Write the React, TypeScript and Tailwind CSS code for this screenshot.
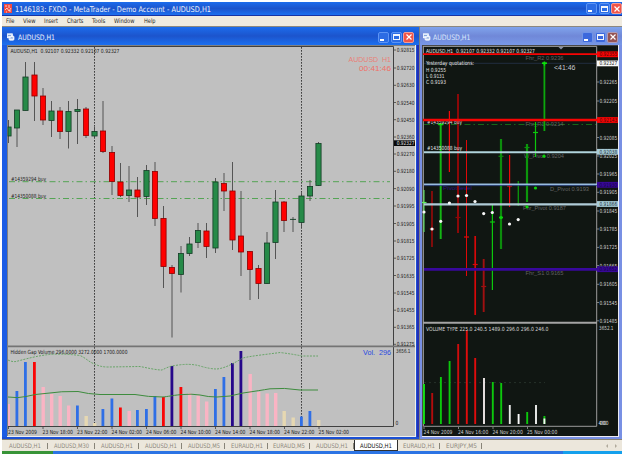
import React from "react";

type Candle = [number, number, number, number, "g" | "r"];

const X0 = 8.4;
const STEP = 8.62;
const px = (i: number) => Math.round((X0 + STEP * i) * 2) / 2;

// wick top, body top, body bottom, wick bottom
const candles: Candle[] = [
  [120, 127, 136, 143, "g"], [110, 110, 128, 147, "g"], [62, 77, 110.5, 110.5, "g"],
  [62, 75, 96, 121, "r"], [88, 96, 120, 125, "r"], [101, 111, 120.5, 137, "g"],
  [107, 111, 131.5, 139, "r"], [101, 111.5, 131.5, 148.5, "g"], [99, 109.5, 111.5, 144, "g"],
  [107, 109, 135.5, 138, "r"], [127, 131.5, 136, 138, "g"], [101, 131, 151.5, 153, "r"],
  [146, 152.5, 181.5, 195, "r"], [163, 182, 195.5, 197, "r"], [166, 190, 195.5, 202, "g"],
  [177, 190, 197, 217, "r"], [165, 170.5, 196.5, 205, "g"], [162, 171.5, 218.5, 226, "r"],
  [206, 218.5, 266.5, 288, "r"], [265, 267.5, 273.5, 337.5, "r"], [246, 253.5, 274.5, 292.5, "g"],
  [237, 244, 253.5, 256, "g"], [223, 230.5, 242.5, 248, "g"], [223, 231, 246.5, 258, "r"],
  [178, 182, 248, 253, "g"], [173, 183.5, 191, 211, "r"], [162, 191, 240, 250, "r"],
  [191, 236, 252, 276, "r"], [251, 251.5, 269.5, 300, "r"], [265, 268.5, 283.5, 299, "r"],
  [232, 243, 283.5, 284, "g"], [190, 202, 242.5, 259, "g"], [201, 202, 220.5, 232, "r"],
  [217, 219.3, 219.5, 232, "g"], [192.5, 196, 222.5, 228, "g"], [180, 186.5, 196, 201, "g"],
  [142, 143.5, 185.5, 186, "g"],
];

const P = "#fab4c4", B = "#2f6fe6", R = "#fa0505", W = "#e6d8b2", N = "#26088a";
const volumes: [number, string][] = [
  [404, P], [391, B], [362, B], [362, R], [387, P], [394, P], [396, P], [405.5, P], [405.5, B],
  [416, W], [423, W], [409, B], [398.5, B], [407.5, R], [411, P], [410, B], [409, B], [396, B],
  [397, R], [366, N], [387, R], [393, P], [395.5, P], [401.5, P], [389, B], [377, B], [363, N],
  [351, N], [374, P], [392, P], [393.5, P], [393, P], [411, W], [417.5, W], [416.5, B], [411, B],
  [420, W],
];

const leftScale: [number, string][] = [
  [50, "0.92815"], [68, "0.92720"], [85.3, "0.92630"], [102.5, "0.92540"], [119.7, "0.92450"],
  [137, "0.92360"], [154, "0.92270"], [171.3, "0.92180"], [188.6, "0.92090"], [206, "0.91995"],
  [223.5, "0.91905"], [241, "0.91815"], [258.2, "0.91725"], [275.5, "0.91635"], [293, "0.91545"],
  [310.2, "0.91455"], [327.3, "0.91365"], [344.3, "0.91275"],
];

const rightScale: [number, string][] = [
  [82, "0.92265"], [101, "0.92205"], [137.5, "0.92085"], [156, "0.92025"], [174, "0.91965"],
  [192.3, "0.91905"], [211, "0.91845"], [229, "0.91785"], [247.4, "0.91725"], [265.6, "0.91665"],
  [284.3, "0.91605"], [302.5, "0.91545"], [320.8, "0.91485"],
];

interface LabelProps {
  x: number;
  y: number;
  w: number;
  s?: number;
  c?: string;
  children: string;
}

function Label({ x, y, w, s = 5.6, c = "#1c1c1c", children }: LabelProps) {
  return (
    <text x={x} y={y + s * 0.36} fontSize={s} fill={c} textLength={w} lengthAdjust="spacingAndGlyphs" className="whitespace-pre">
      {children}
    </text>
  );
}

function LeftChart() {
  return (
    <svg
      viewBox="7 45 409 392"
      width="409"
      height="392"
      className="block font-['DejaVu_Sans_Condensed','DejaVu_Sans',sans-serif]"
    >
      <rect x="7" y="45" width="409" height="392" fill="#c0c0c0" />
      <path d="M7 45.5H415M7.5 45V437" stroke="#808080" />
      <path d="M8 46.5H393.5V426.5H8" fill="none" stroke="#404040" />
      <path d="M415.5 45V437M7 436.5H416" stroke="#f0f0ee" />
      <path d="M94.5 47V426M301.5 47V426" stroke="#404040" strokeDasharray="1.7 1.3" />
      <path d="M9 181.7H390M9 198.5H390" stroke="#48a048" strokeWidth="0.9" strokeDasharray="6 3 1.5 3" />
      {candles.map(([wt, bt, bb, wb, k], i) => {
        const x = px(i);
        const left = Math.max(x - 2.6, 8);
        return (
          <g key={i}>
            <path d={`M${x} ${wt}V${wb}`} stroke="#484848" strokeWidth="0.9" />
            <rect
              x={left}
              y={bt}
              width={x + 2.6 - left}
              height={bb - bt}
              fill={k === "g" ? "#268a48" : "#ff0000"}
              stroke={k === "g" ? "#143c26" : "#8c0000"}
              strokeWidth="0.8"
            />
          </g>
        );
      })}
      {volumes.map(([t, c], i) => {
        const x = px(i);
        return <rect key={i} x={Math.max(x - 1.5, 8)} y={t} width={i === 0 ? 2 : c === P || c === W ? 3.4 : 2.8} height={426 - t} fill={c} />;
      })}
      <path
        d="M8 360Q12 362 16 361.5C22 360 32 357 45 355Q60 353 80 355.5C86 358 90 363 95 364Q100 367 108 367L140 366.5C148 368 156 370 162 370C166 368 170 366 175 365.5Q190 363 200 366Q210 369 217 369C226 368 234 363 243 358C250 356 270 354 280 352.5Q292 354 302 356H318"
        fill="none" stroke="#5ea05e" strokeWidth="0.9" strokeDasharray="2 1.2"
      />
      <path
        d="M8 397Q18 398.5 26 396.5Q35 394 45 393.5Q62 391 78 391.5Q88 394 100 394.5H135Q148 397 163 397C168 396.5 172 395.5 180 394.7Q192 393.5 200 395Q208 397 217 397Q230 397 243 393Q260 390.5 270 388.8Q284 387.5 300 390H318"
        fill="none" stroke="#3e8c3e"
      />
      <path d="M8 346.3H415" stroke="#747474" strokeWidth="1.8" />
      <Label x={10.5} y={51} w={109}>AUDUSD,H1  0.92107 0.92332 0.92107 0.92327</Label>
      <Label x={11} y={179.3} w={35}>#14359294 buy</Label>
      <Label x={11} y={196} w={35}>#14350088 buy</Label>
      <Label x={10.5} y={352.4} w={117}>Hidden Gap Volume 296.0000 3272.0000 1700.0000</Label>
      <g className="font-['Liberation_Sans',Arial,sans-serif]">
        <Label x={348.5} y={59.5} w={42.5} s={7.5} c="#e88078">AUDUSD  H1</Label>
        <Label x={359} y={68} w={32} s={7.5} c="#f07068">00:41:46</Label>
        <Label x={363} y={352.5} w={28} s={7.4} c="#2848e0">Vol.  296</Label>
      </g>
      {leftScale.map(([y, t]) => (
        <g key={t}>
          <path d={`M394 ${y}H396`} stroke="#404040" strokeWidth="0.8" />
          <Label x={396.7} y={y} w={17.8}>{t}</Label>
        </g>
      ))}
      <rect x="394" y="140.3" width="21" height="5.7" fill="#080808" />
      <Label x={396.7} y={143.2} w={17.8} c="#e0e0e0">0.92327</Label>
      <Label x={396} y={351.2} w={14.5}>3656.1</Label>
      <Label x={395.5} y={423.3} w={2.8}>0</Label>
      {["23 Nov 2009", "23 Nov 18:00", "23 Nov 22:00", "24 Nov 02:00", "24 Nov 06:00", "24 Nov 10:00", "24 Nov 14:00", "24 Nov 18:00", "24 Nov 22:00", "25 Nov 02:00"].map((t, i) => (
        <g key={t}>
          <path d={`M${8.5 + i * 34.5} 427v2`} stroke="#404040" strokeWidth="0.8" />
          <Label x={i === 0 ? 8 : 8 + i * 34.5} y={432} w={i === 0 ? 29 : 30.5}>{t}</Label>
        </g>
      ))}
    </svg>
  );
}

// x, top, bottom, colour, width, tick level
const bars: [number, number, number, string, number, number?][] = [
  [424, 190, 232, "#60f060", 1, 202.5],
  [432, 191, 247, "#8c0c0c", 1.8, 229],
  [440.7, 124, 239, "#14b414", 2, 124],
  [449.4, 111, 172, "#f40808", 1.2],
  [458, 94, 233, "#8c0808", 2, 217.5],
  [466.5, 140, 276, "#e00808", 1, 237],
  [475.2, 236, 315, "#d80808", 1.7, 264.5],
  [483.7, 259, 312, "#a01010", 1.9, 286.5],
  [492.4, 205, 290, "#0cc80c", 1.2, 222],
  [501, 139, 249, "#0c8c0c", 2.2, 156.3],
  [509.6, 155, 207, "#f00808", 1.2, 186],
  [518.3, 181, 206, "#0c980c", 1.3],
  [527, 144, 202, "#0c960c", 2.2, 147.5],
  [535.5, 122, 157, "#0cc80c", 1.2, 132.5],
  [544.4, 62, 131, "#0ca80c", 1.8, 63.3],
];

const dots: [number, number][] = [
  [424, 212], [432, 229], [440.7, 221.3], [449.4, 203], [458, 196], [466.5, 195.5], [475, 201.5],
  [483.7, 213.6], [492.3, 212.5], [509.5, 224], [518.2, 219.6],
];

const typeBars: [number, number, string][] = [
  [424, 384, "#14e014"], [432.2, 393, "#b40c0c"], [440.9, 377, "#0cc80c"], [449.6, 361, "#0cc80c"],
  [458.2, 344, "#d00c0c"], [466.8, 330, "#e00c0c"], [475.2, 358, "#e00c0c"], [484, 378, "#f0e8e8"],
  [492.8, 382, "#0cc80c"], [501.2, 383, "#0cc80c"], [509.8, 405, "#e8e8e8"], [518.6, 414, "#fafafa"],
  [527.2, 412, "#0cc80c"], [536, 405, "#f0f0f0"], [544.4, 416, "#0cc80c"],
];

function PriceTag({ y, bg, c, t }: { y: number; bg: string; c: string; t: string }) {
  return (
    <g>
      <rect x="597" y={y - 2.9} width="21" height="5.8" fill={bg} />
      <Label x={599.5} y={y} w={17.8} c={c}>{t}</Label>
    </g>
  );
}

function RightChart() {
  return (
    <svg
      viewBox="422 45 197 392"
      width="197"
      height="392"
      className="block font-['DejaVu_Sans_Condensed','DejaVu_Sans',sans-serif]"
    >
      <rect x="422" y="45" width="197" height="392" fill="#101612" />
      <path d="M422 45.5H619M422.5 45V437" stroke="#404040" />
      <path d="M423 46.4H596.7V426.3H423.4V46" fill="none" stroke="#9c9c9c" />
      <path d="M618.5 45V437M422 436.5H619" stroke="#ececf4" />
      <path d="M424 63.3H596" stroke="#26344c" strokeWidth="0.8" />
      <path d="M424 124.5H596" stroke="#187018" strokeWidth="0.9" strokeDasharray="6 3 1.5 3" />
      <path d="M558.5 47h5l-2.5 2.5z" fill="#8890a8" />
      <Label x={426} y={51.2} w={109} c="#e0e0e0">AUDUSD,H1  0.92107 0.92332 0.92107 0.92327</Label>
      <Label x={426} y={63.2} w={48} c="#e8e8e8">Yesterday quotations:</Label>
      <Label x={426} y={69.6} w={20} c="#e0e0e0">H 0.9255</Label>
      <Label x={426} y={76} w={18.5} c="#e0e0e0">L 0.9131</Label>
      <Label x={426} y={82} w={20} c="#e0e0e0">C 0.9193</Label>
      <g className="font-['Liberation_Sans',Arial,sans-serif]">
        <Label x={554} y={67.7} w={21.5} s={7} c="#c8c8d0">{"<41:46"}</Label>
        <Label x={525.5} y={58} w={38} c="#606060">Fhr_R2 0.9236</Label>
        <Label x={525.5} y={124} w={38} c="#606060">Fhr_R1 0.9214</Label>
        <Label x={524} y={155.5} w={40} c="#646464">W_Pivot 0.9204</Label>
        <Label x={550} y={188.8} w={39} c="#646464">D_Pivot 0.9193</Label>
        <Label x={523} y={207.6} w={43} c="#646464">Fhr_Pivot 0.9187</Label>
        <Label x={525.5} y={273.2} w={38} c="#606060">Fhr_S1 0.9165</Label>
        <Label x={443} y={188.3} w={29} c="#2c1480">Pivot level</Label>
      </g>
      {rightScale.map(([y, t]) => (
        <g key={t}>
          <path d={`M597 ${y}H599`} stroke="#9c9c9c" strokeWidth="0.8" />
          <Label x={599.5} y={y} w={17.8} c="#d0d0d0">{t}</Label>
        </g>
      ))}
      {bars.map(([x, t, b, c, w, tick]) => (
        <g key={x}>
          <path d={`M${x} ${t}V${b}`} stroke={c} strokeWidth={w} />
          {tick && <path d={`M${x - 2.5} ${tick}h5`} stroke={c} strokeWidth="1.2" />}
        </g>
      ))}
      <path d="M542 63.3h5M438.3 124.5h5M544.4 61.5v4M499 217.5h4" stroke="#0ce00c" strokeWidth="1.6" />
      <Label x={427} y={122.3} w={35} c="#d8d8d8">#14359294 buy</Label>
      <Label x={427} y={148.2} w={35} c="#e8e8e8">#14350088 buy</Label>
      <path d="M423 54.2H597" stroke="#f80404" strokeWidth="1.7" />
      <path d="M423 120H597" stroke="#f80404" strokeWidth="2.3" />
      <path d="M424 152.2H597" stroke="#b0d4dc" strokeWidth="2" />
      <path d="M424 184.4H597" stroke="#98bce0" strokeWidth="1.6" />
      <path d="M424 185.6H597" stroke="#304888" strokeWidth="0.8" />
      <path d="M424 204.4H597" stroke="#b0ccd8" strokeWidth="2.2" />
      <path d="M424 269.4H597" stroke="#38089c" strokeWidth="2.8" />
      {dots.map(([x, y]) => <circle key={x} cx={x} cy={y} r="1.6" fill="#f8f8f8" />)}
      {[[501, 217.5], [527, 206.8], [535.5, 188], [544, 156.2]].map(([x, y]) => (
        <circle key={x} cx={x} cy={y} r="1.6" fill="#0cd00c" />
      ))}
      <PriceTag y={54.3} bg="#f80404" c="#500808" t="0.92355" />
      <PriceTag y={63.4} bg="#f8f8f8" c="#202020" t="0.92327" />
      <PriceTag y={120} bg="#f80404" c="#500808" t="0.92143" />
      <PriceTag y={151.8} bg="#a8ccd8" c="#203038" t="0.92038" />
      <PriceTag y={184.8} bg="#380898" c="#140440" t="0.91930" />
      <PriceTag y={204} bg="#a8ccd8" c="#203038" t="0.91866" />
      <PriceTag y={269.2} bg="#380898" c="#140440" t="0.91652" />
      <path d="M423 322.8H597" stroke="#a4a4a4" strokeWidth="1.9" />
      <path d="M424 382.6H545" stroke="#2c3830" strokeWidth="0.8" strokeDasharray="2 3" />
      {typeBars.map(([x, t, c]) => (
        <path key={x} d={`M${x} ${t}V424`} stroke={c} strokeWidth="1.9" />
      ))}
      <path d="M544.4 418.5V424" stroke="#f4f4f4" strokeWidth="1.9" />
      <Label x={426} y={329.2} w={122.5} c="#d8d8d8">VOLUME TYPE 225.0 240.5 1489.0 296.0 296.0 246.0</Label>
      <Label x={599} y={327.8} w={14.5} c="#d0d0d0">3652.1</Label>
      <Label x={598.5} y={423.4} w={8} c="#d8d8d8">480</Label>
      <Label x={599.5} y={423.4} w={9} c="#d8d8d8">000</Label>
      {["24 Nov 2009", "24 Nov 16:00", "24 Nov 20:00", "25 Nov 00:00"].map((t, i) => (
        <g key={t}>
          <path d={`M${424 + i * 34.5} 427v2`} stroke="#9c9c9c" strokeWidth="0.8" />
          <Label x={423.5 + i * 34.5} y={432} w={i === 0 ? 29 : 30.3} c="#d0d0d0">{t}</Label>
        </g>
      ))}
    </svg>
  );
}

function Buttons({ dim = false }: { dim?: boolean }) {
  const blue = dim ? "border-[#7094e8] bg-[#3c68dc]" : "border-[#5c94f4] bg-[#2c6ce4]";
  return (
    <div className="flex gap-[1.5px]">
      <div className={`flex h-[11px] w-[11px] items-end rounded-[2px] border pb-px pl-px ${blue}`}>
        <div className="h-[2px] w-1 bg-white" />
      </div>
      <div className={`flex h-[11px] w-[11px] items-center justify-center rounded-[2px] border ${blue}`}>
        <div className="h-1.5 w-[7px] border border-t-2 border-[#f0f4fc]" />
      </div>
      <div className={`flex h-[11px] w-[11px] items-center justify-center rounded-[2px] border ${dim ? "border-[#b09cb4] bg-[#945454]" : "border-[#f09c98] bg-[#f05448]"}`}>
        <svg viewBox="0 0 6 6" className="h-[6px] w-[6px]">
          <path d="M.5.5l5 5M5.5.5l-5 5" stroke="#fff" strokeWidth="1.2" />
        </svg>
      </div>
    </div>
  );
}

function ChartIcon() {
  return (
    <svg viewBox="0 0 8 8" className="h-2 w-2 shrink-0">
      <rect x="0.4" y="0.8" width="5" height="4" fill="#d8e8fc" stroke="#fff" strokeWidth="0.7" />
      <rect x="2" y="3" width="5" height="4.2" rx="1" fill="#e8f0fc" stroke="#fff" strokeWidth="0.7" />
      <path d="M3 5.6l1-1 1 .8 1.2-1M1 2.6h3" stroke="#3c68c0" strokeWidth="0.6" fill="none" />
    </svg>
  );
}

function Heading({ w, s, c, children }: { w: number; s: number; c: string; children: string }) {
  return (
    <svg width={w} height="12" className="block shrink-0 overflow-visible font-['DejaVu_Sans_Condensed','DejaVu_Sans',sans-serif]">
      <text x="0" y={6 + s * 0.36} fontSize={s} fill={c} textLength={w} lengthAdjust="spacingAndGlyphs" className="whitespace-pre">
        {children}
      </text>
    </svg>
  );
}

const menu: [string, number][] = [
  ["File", 8.5], ["View", 12.5], ["Insert", 14], ["Charts", 16.5], ["Tools", 13.5],
  ["Window", 20.5], ["Help", 11.5],
];

const tabs: [string, number, number][] = [
  ["AUDUSD,H1", 45.5, 32], ["AUDUSD,M30", 47, 35], ["AUDUSD,H1", 44, 32], ["AUDUSD,H1", 43, 32],
  ["AUDUSD,M5", 43, 32], ["EURAUD,H1", 43, 32], ["EURAUD,M5", 42, 32], ["AUDUSD,H1", 43.5, 32],
  ["AUDUSD,H1", 44, 32], ["EURAUD,H1", 42.5, 32], ["EURJPY,M5", 42, 31],
];

export default function App() {
  return (
    <div className="flex h-[454px] w-[625px] flex-col overflow-hidden bg-white pl-[2px] pr-[3px] pt-[2px]">
      <header className="flex h-[14px] shrink-0 items-center border-b border-[#1834a4] bg-linear-to-b from-[#1c6cec] via-[#1c54cc] to-[#1c70f0] pl-[2px]">
        <svg viewBox="0 0 8 9" className="mr-[3px] h-[9px] w-2 shrink-0">
          <rect width="8" height="9" fill="#f04840" />
          <path d="M1 2h2M5 1v3M1 6l2-2 2 3 2-3M2 8h1M6 6v2" stroke="#fce8e0" strokeWidth="0.8" fill="none" />
        </svg>
        <Heading w={196} s={7.8} c="#f0f4fc">{"1146183: FXDD - MetaTrader - Demo Account - AUDUSD,H1"}</Heading>
        <div className="ml-auto"><Buttons /></div>
      </header>
      <nav className="flex h-[11px] shrink-0 items-center gap-[8.8px] border-b border-[#8c8880] bg-[#f0ebe0] pl-[3.5px]">
        {menu.map(([t, w]) => (
          <Heading key={t} w={w} s={6.3} c="#282828">{t}</Heading>
        ))}
      </nav>
      <main className="flex h-[412px] shrink-0 bg-[#808080]">
        <section className="w-[416.5px] shrink-0 bg-[#1c50d4] pb-[2px]">
          <div className="flex h-[18px] items-center bg-linear-to-b from-[#1c6cec] via-[#1c54cc] to-[#1c70f0] pl-[5px] pt-[2px]">
            <ChartIcon />
            <div className="w-[2.5px]" />
            <Heading w={37} s={7.5} c="#f0f4fc">AUDUSD,H1</Heading>
            <div className="ml-auto pr-[4.5px]"><Buttons /></div>
          </div>
          <div className="border-l-[5px] border-r-[2.5px] border-l-[#1c5ce4] border-r-[#2430b4]">
            <LeftChart />
          </div>
        </section>
        <section className="ml-px w-[202.5px] shrink-0 bg-[#7890e4] pb-[2px]">
          <div className="flex h-[18px] items-center bg-linear-to-b from-[#80a4ec] via-[#7088d8] to-[#7898e8] pl-[3px] pt-[2px]">
            <ChartIcon />
            <div className="w-[2.5px]" />
            <Heading w={37.5} s={7.5} c="#dce8fc">AUDUSD,H1</Heading>
            <div className="ml-auto pr-[4px]"><Buttons dim /></div>
          </div>
          <div className="pl-[2.5px]">
            <RightChart />
          </div>
        </section>
      </main>
      <footer className="flex h-[12px] shrink-0 border-t border-[#888478] bg-[#ece7dc] pl-[0.7px]">
        {tabs.map(([t, w, tw], i) => (
          <div
            key={i}
            style={{ width: w }}
            className={
              i === 8
                ? "flex shrink-0 items-center justify-center border border-t-0 border-[#303030] bg-white pt-px"
                : "flex shrink-0 items-center justify-center bg-[linear-gradient(#888478,#888478)] bg-[length:1px_6px] bg-[position:right_center] bg-no-repeat"
            }
          >
            <Heading w={tw} s={6.2} c={i === 8 ? "#101010" : "#8c887c"}>{t}</Heading>
          </div>
        ))}
        <svg viewBox="0 0 14 6" className="my-auto ml-auto mr-[3px] h-[6px] w-[14px]">
          <path d="M3 1L1 3l2 2zM10 1l2 2-2 2z" fill="#b0aa9c" />
        </svg>
      </footer>
      <div className="flex flex-1">
        <div className="w-[51px] bg-[#389438]" />
        <div className="flex-1 bg-[#2c74e4]" />
        <div className="w-[59px] bg-[#14a0ec]" />
      </div>
    </div>
  );
}
